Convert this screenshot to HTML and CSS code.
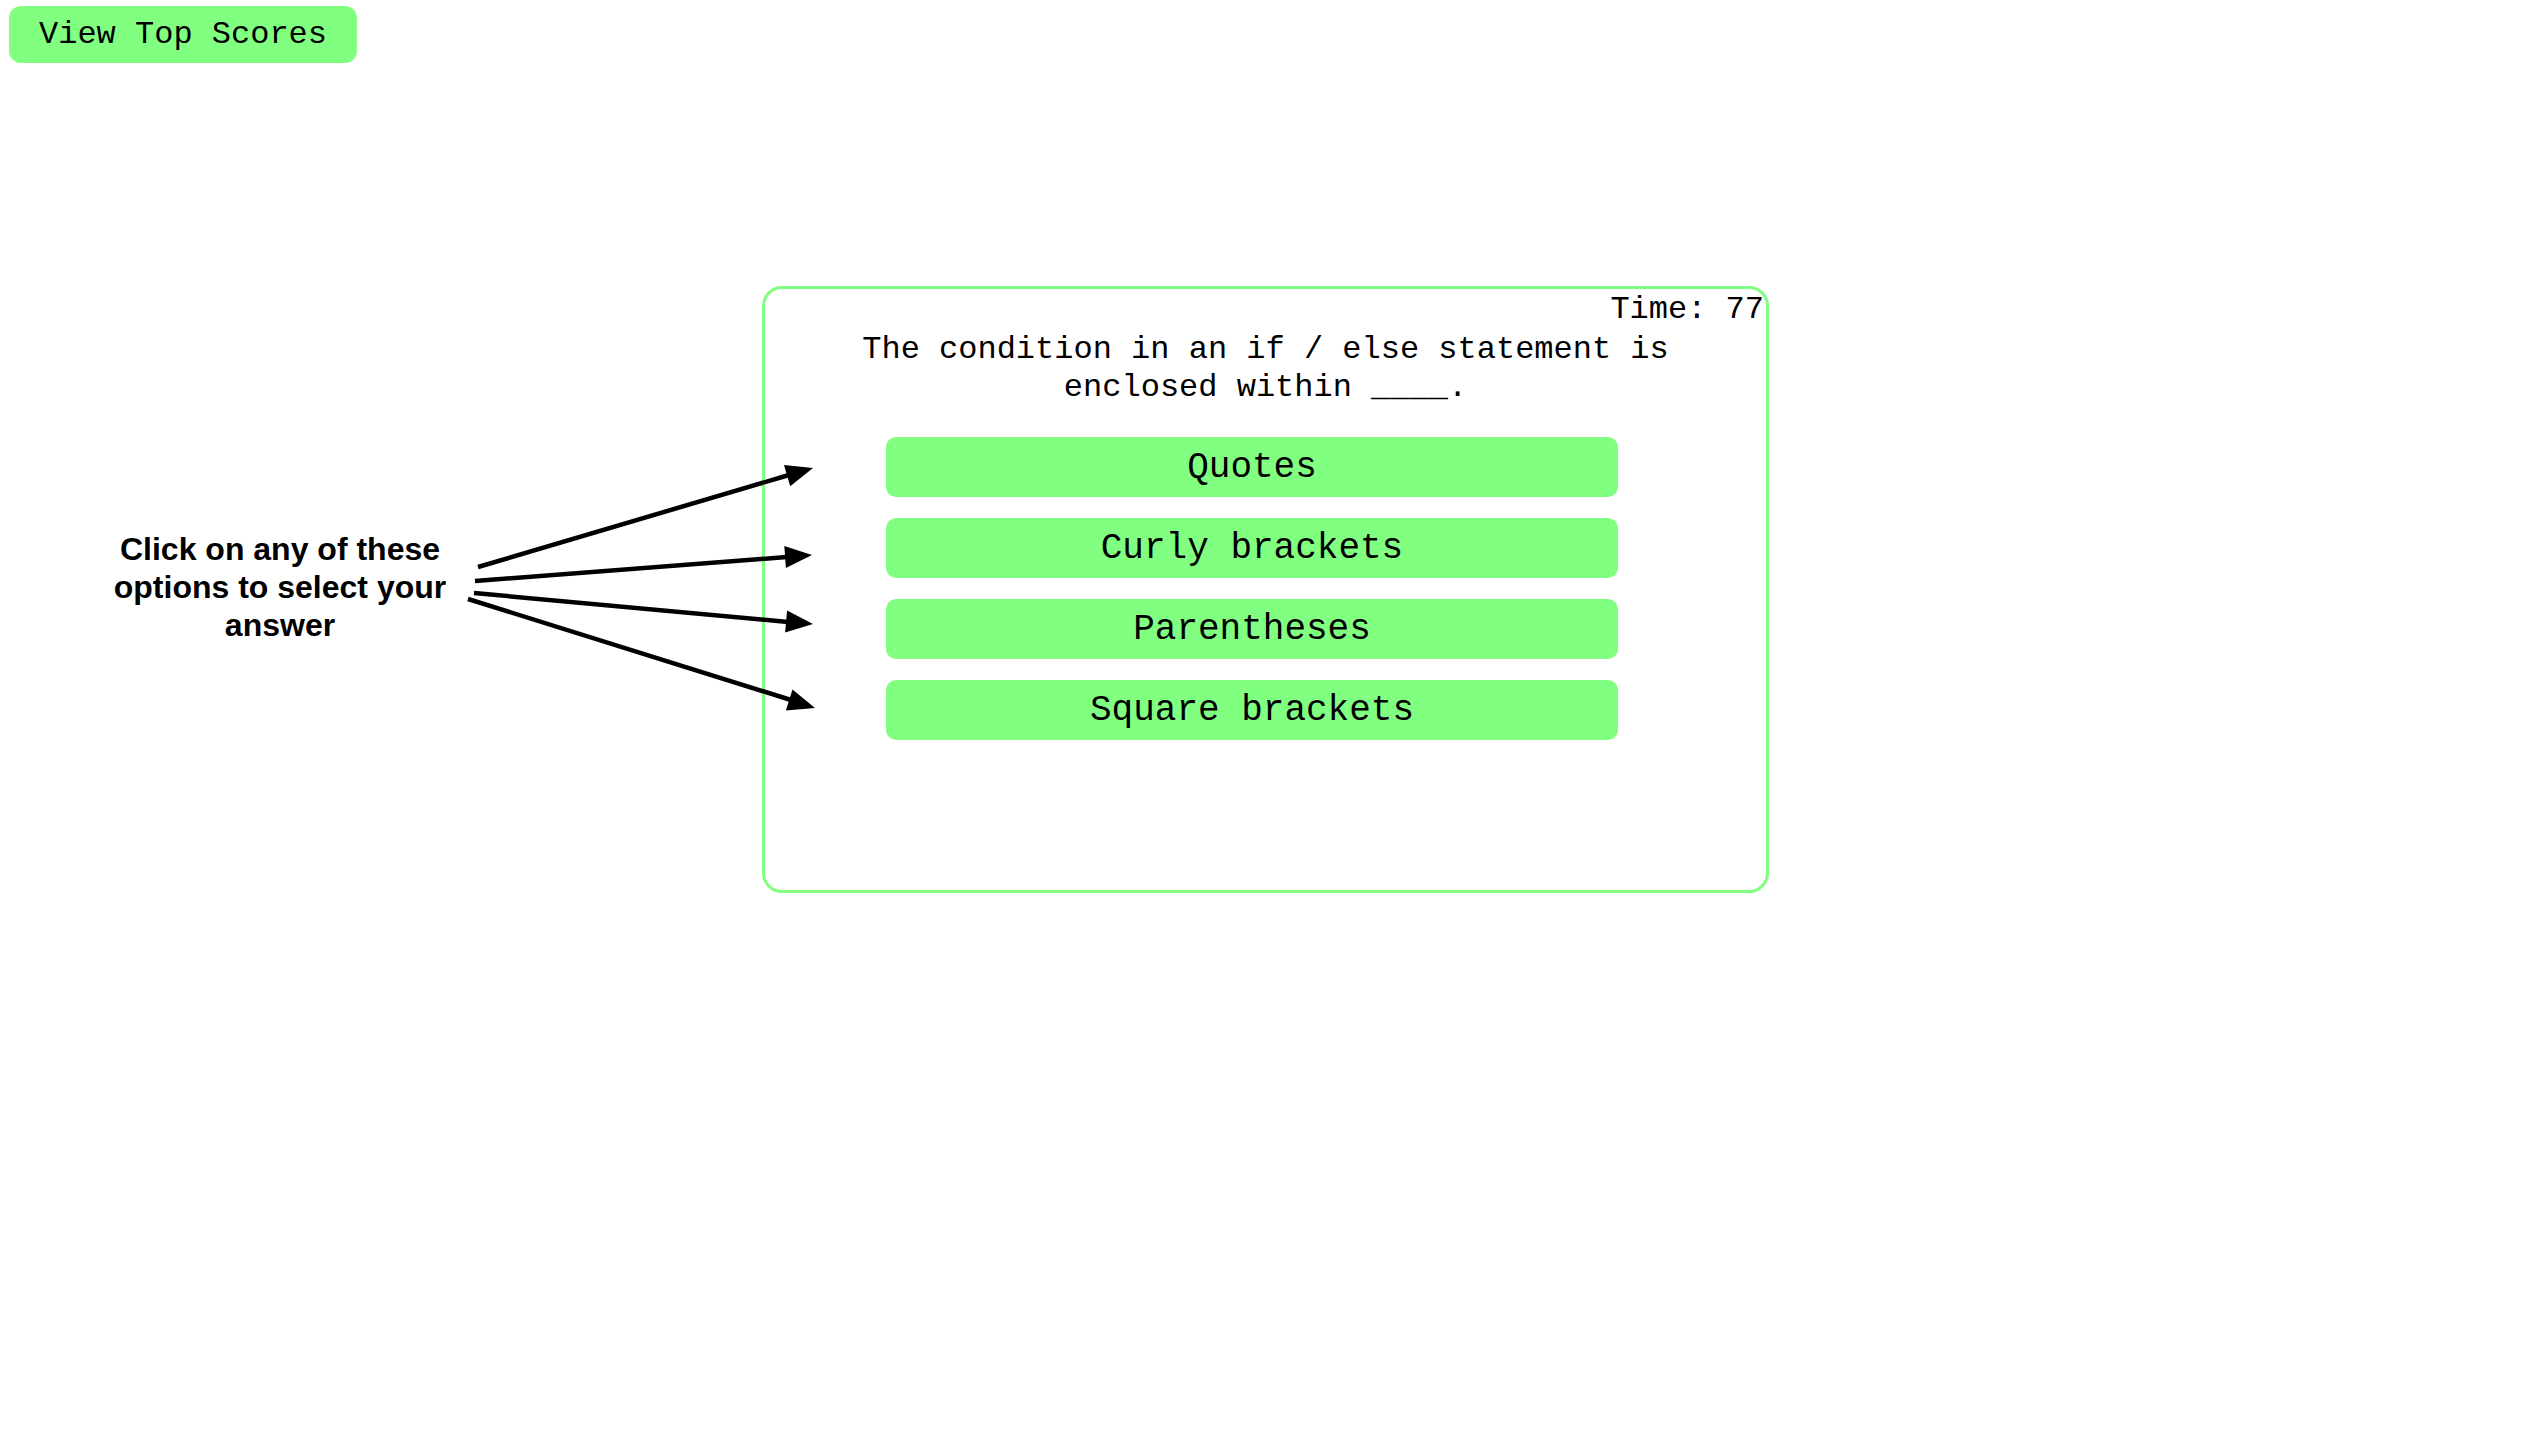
FILE: index.html
```html
<!DOCTYPE html>
<html lang="en">
<head>
    <meta charset="UTF-8">
    <title>Code Quiz</title>
    <link rel="stylesheet" href="styles.css">
</head>
<body>
    <header class="top-bar">
        <button class="btn btn-scores">View Top Scores</button>
    </header>

    <main class="stage">
        <aside class="hint">
            <p class="hint-text">Click on any of these options to select your answer</p>
            <svg class="hint-arrows" width="730" height="460" viewBox="100 286 730 460">
                <g stroke="#000" stroke-width="4.5" fill="none">
                    <line x1="478" y1="567" x2="789" y2="475"/>
                    <line x1="475" y1="581" x2="787" y2="557"/>
                    <line x1="474" y1="593" x2="788" y2="622"/>
                    <line x1="468" y1="599" x2="791" y2="700"/>
                </g>
                <g fill="#000">
                    <polygon points="813,468 790.2,486.2 784,465.1"/>
                    <polygon points="812,555 785.9,568.1 784.3,546.1"/>
                    <polygon points="813,624 785.1,632.5 787.1,610.5"/>
                    <polygon points="815,708 785.9,710.4 792.5,689.4"/>
                </g>
            </svg>
        </aside>

        <section class="quiz">
            <div class="timer">Time: <span id="time">77</span></div>
            <h2 class="question">The condition in an if / else statement is enclosed within ____.</h2>
            <div class="options">
                <button class="btn btn-option">Quotes</button>
                <button class="btn btn-option">Curly brackets</button>
                <button class="btn btn-option">Parentheses</button>
                <button class="btn btn-option">Square brackets</button>
            </div>
        </section>
    </main>
</body>
</html>
```

FILE: styles.css
```css
* {
    margin: 0;
    padding: 0;
    box-sizing: border-box;
}

body {
    background: #fff;
    color: #000;
    font-family: 'Liberation Mono', 'Courier New', monospace;
}

.top-bar {
    padding: 6px 0 0 9px;
}

.btn {
    border: none;
    background: #80ff80;
    color: #000;
    font-family: 'Liberation Mono', 'Courier New', monospace;
    cursor: pointer;
}

.btn-scores {
    width: 348px;
    height: 57px;
    border-radius: 12px;
    font-size: 32px;
}

.stage {
    display: flex;
    align-items: flex-start;
    margin-top: 223px;
    padding-left: 100px;
}

.hint {
    position: relative;
    width: 662px;
    flex-shrink: 0;
    padding-top: 244px;
}

.hint-text {
    width: 360px;
    text-align: center;
    font-family: 'Liberation Sans', Arial, sans-serif;
    font-weight: 700;
    font-size: 32px;
    line-height: 38px;
}

.hint-arrows {
    position: absolute;
    left: 0;
    top: 0;
    z-index: 2;
    pointer-events: none;
}

.quiz {
    width: 1007px;
    height: 607px;
    border: 3px solid #80ff80;
    border-radius: 20px;
    background: #fff;
}

.timer {
    text-align: right;
    font-size: 32px;
    line-height: 36px;
    padding: 3px 2px 0 0;
}

.question {
    max-width: 880px;
    margin: 3px auto 0;
    text-align: center;
    font-size: 32px;
    font-weight: 400;
    line-height: 38px;
}

.options {
    display: flex;
    flex-direction: column;
    gap: 21px;
    margin: 30px 0 0 121px;
    width: 732px;
}

.btn-option {
    height: 60px;
    border-radius: 10px;
    font-size: 36px;
}
```
